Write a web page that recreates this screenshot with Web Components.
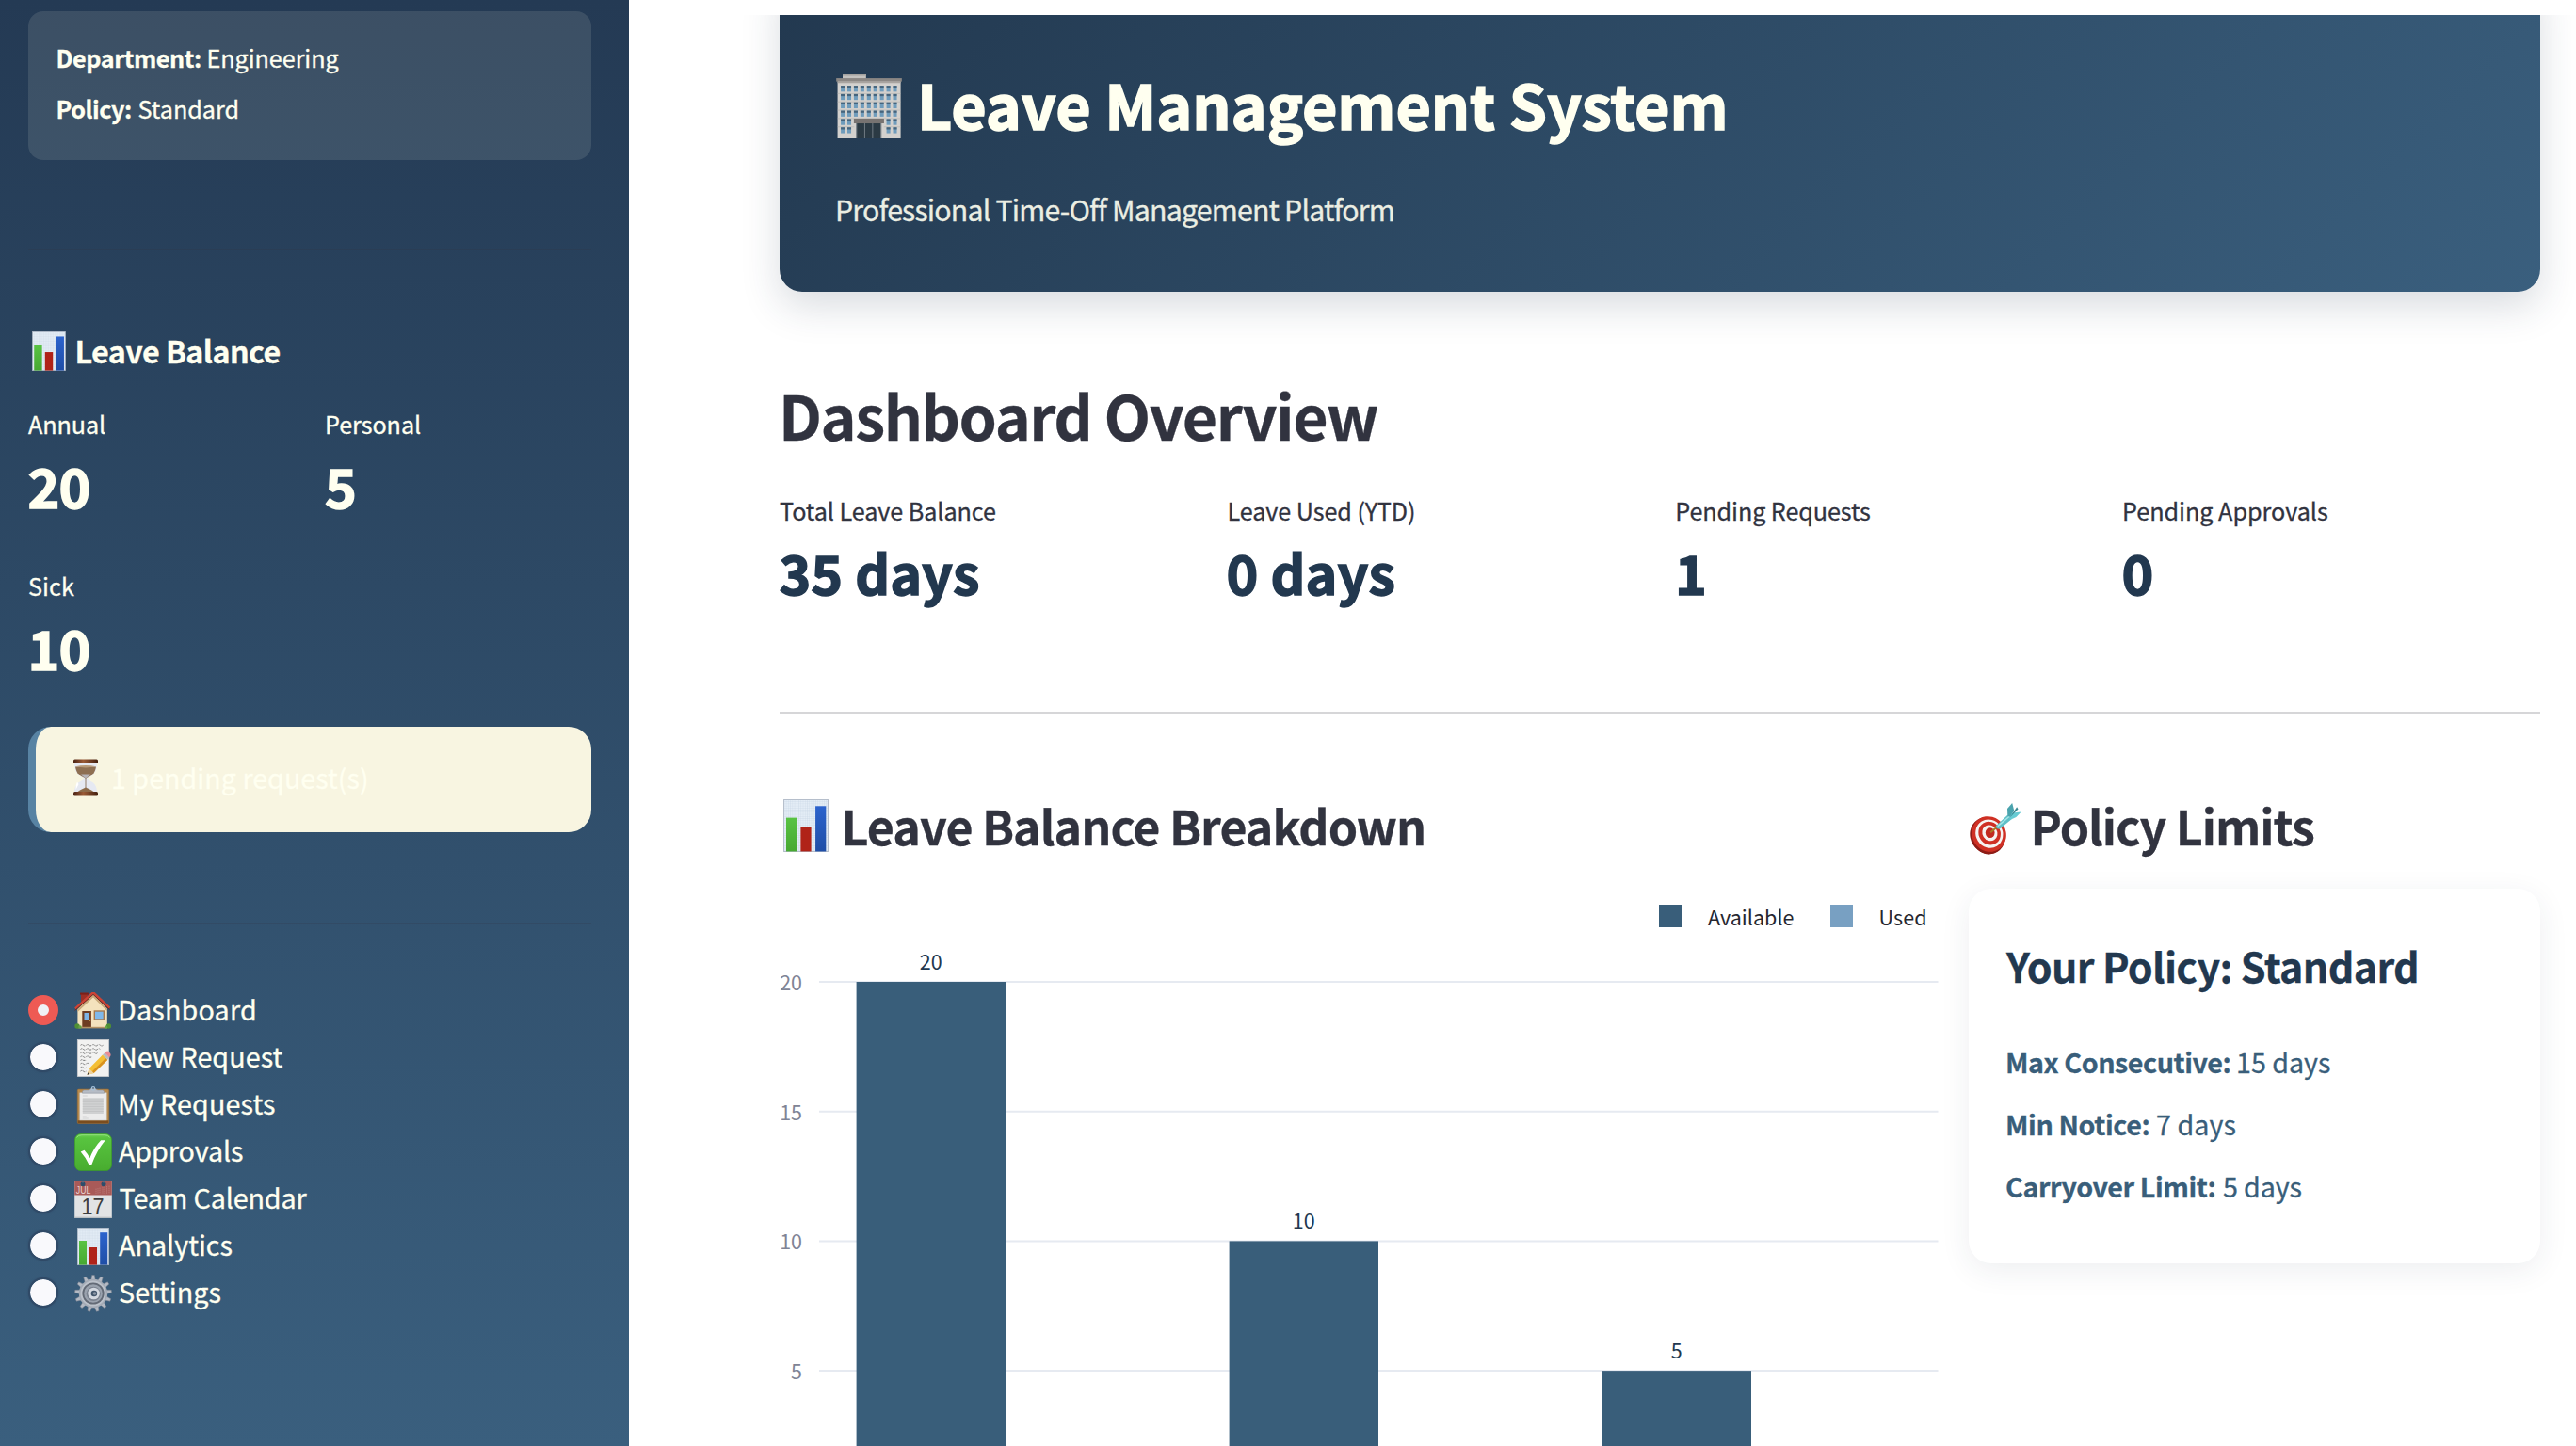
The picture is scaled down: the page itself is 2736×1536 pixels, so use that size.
<!DOCTYPE html>
<html lang="en">
<head>
<meta charset="utf-8">
<title>Leave Management System</title>
<style>
html,body{margin:0;padding:0;background:#fff}
body{width:2736px;height:1536px;overflow:hidden;font-family:"Noto Sans CJK SC","Noto Sans",sans-serif;color:#31333f;-webkit-text-stroke:.3px currentColor}
</style>
</head>
<body>
<leave-app></leave-app>
<script>
const FONT = '"Noto Sans CJK SC","Noto Sans",sans-serif';
const ctx = document.createElement('canvas').getContext('2d');
const define = (name, html, extra) => customElements.define(name, class extends HTMLElement {
  constructor(){ super(); this.attachShadow({mode:'open'}); }
  connectedCallback(){
    this.shadowRoot.innerHTML = typeof html === 'function' ? html(this) : html;
    if (extra) extra(this);
  }
});

/* One line of text whose glyphs are tracked to fill the given width. */
define('fit-text', '<style>:host{display:inline-block;white-space:nowrap;flex:none}span{display:block}</style><span><slot></slot></span>', el => {
  const s = getComputedStyle(el), t = el.textContent;
  ctx.font = `${s.fontWeight} ${s.fontSize} ${FONT}`;
  const m = ctx.measureText(t), ink = m.actualBoundingBoxRight + m.actualBoundingBoxLeft;
  const w = +el.getAttribute('w') || ink;
  el.style.width = w + 'px';
  const span = el.shadowRoot.querySelector('span');
  span.style.marginLeft = m.actualBoundingBoxLeft + 'px';
  if (t.length > 1) span.style.letterSpacing = ((w - ink) / (t.length - 1)).toFixed(3) + 'px';
});

const ICONS = {
chart:`<defs><linearGradient id="g" x2="0" y2="1"><stop offset="0" stop-color="#58c343"/><stop offset="1" stop-color="#47a832"/></linearGradient><linearGradient id="b" x2="0" y2="1"><stop offset="0" stop-color="#2c63cd"/><stop offset="1" stop-color="#1f4ea6"/></linearGradient><pattern id="p" width="1.6" height="1.6" patternUnits="userSpaceOnUse"><path d="M0 0H1.6M0 0V1.6" stroke="#c3d2e2" stroke-width=".35"/></pattern></defs>
<rect x="3.3" y=".3" width="33.4" height="39.4" fill="#e4edf6" stroke="#a9b2c0" stroke-width=".6"/><rect x="3.6" y=".6" width="32.8" height="38.8" fill="url(#p)"/>
<rect x="5" y="14" width="8" height="25.6" fill="url(#g)"/><rect x="16" y="21" width="8" height="18.6" fill="#b02318"/><rect x="27.2" y="5.2" width="8" height="34.4" fill="url(#b)"/>`,
house:`<path d="M7 .8h7v9H7z" fill="#9c2f25"/><path d="M6 .6h9v2H6z" fill="#7c2019"/><path d="M3.4 18 20 2.5 34.8 17.5V38H3.4z" fill="#f4e2bd"/><path d="M3.4 18 20 2.5 34.8 17.5V20L20 5.5 3.4 21z" fill="#c9a87a"/><path d="M1 17.5 20 .3 37.4 16.8" fill="none" stroke="#cc4335" stroke-width="2.6"/><path d="M.6 19.4 20 2.4 37.6 18.6" fill="none" stroke="#6e241c" stroke-width=".9"/>
<rect x="8.3" y="20" width="9.6" height="17.7" fill="#6e3d22"/><rect x="10.5" y="22" width="5" height="7" fill="#7db4e6"/><circle cx="16.5" cy="30" r=".8" fill="#e8c060"/><rect x="20.6" y="19.3" width="11.4" height="10.5" fill="#a7794c"/><rect x="22" y="20.7" width="8.6" height="7.6" fill="#7fb8ea"/><path d="M3.4 36.8h31.4v1.6H3.4z" fill="#b59263"/>
<circle cx="3" cy="36" r="2.7" fill="#4f8f34"/><circle cx="6" cy="37" r="1.8" fill="#66a544"/><circle cx="36.4" cy="36" r="2.7" fill="#4f8f34"/><circle cx="33.6" cy="37.2" r="1.6" fill="#66a544"/>`,
memo:`<rect x="3.3" y=".4" width="33.4" height="39.2" fill="#f2f2f1" stroke="#c9cacc" stroke-width=".7"/><g fill="none" stroke="#6b6b6b" stroke-width=".9" stroke-dasharray="1.6 .7 3 .9 .8 .6"><path d="M6.5 6.3q1.5-1.4 3 0t3 0 3 0 3 0 3 0 3 0 3 0 3 0"/><path d="M6.5 10.5q1.5-1.4 3 0t3 0 3 0 3 0 3 0 3 0 3 0"/><path d="M6.5 14.6q1.5-1.4 3 0t3 0 3 0 3 0 3 0 3 0"/><path d="M6.5 18.6q1.5-1.4 3 0t3 0 3 0 3 0"/><path d="M6.5 22.4q1.5-1.4 3 0h3"/><path d="M6.5 26q1.5-1.4 3 0t3 0 3 0"/><path d="M6.5 30q1.5-1.4 3 0t3 0"/><path d="M6.5 34q1.5-1.4 3 0t3 0"/></g>
<path d="M13.6 37.8 15.7 31 30 16.6l5.2 5.2L20.6 36z" fill="#f4bf35"/><path d="M18.8 34.2 33.3 20l1.9 1.9L20.6 36z" fill="#d9921f"/><path d="M15.7 31 20.6 36l-7 1.8z" fill="#ecd1a0"/><path d="m14.4 35.3-.8 2.5 2.5-.7z" fill="#333"/><path d="m30 16.6 2.4-2.3 5.1 5.1-2.3 2.4z" fill="#b8bcc0"/><path d="m32.2 14.4 1.4-1.3q1.8-1.3 3.8.8t.9 3.8l-1.2 1.5z" fill="#ea8c93"/>`,
clip:`<rect x="3.2" y="3" width="33.6" height="36.6" rx="1.4" fill="#b88b4e" stroke="#8e6532" stroke-width=".6"/><path d="M3.6 36.2h32.8v3H3.6z" fill="#7b4d1e"/><rect x="5.8" y="6.8" width="28.4" height="29.2" fill="#ececec" stroke="#c8c8c8" stroke-width=".5"/><rect x="8.8" y="12.2" width="22" height="16.8" fill="#d0d1d2"/><path d="M8.8 14h22M8.8 16.5h22M8.8 19h22M8.8 21.5h22M8.8 24h22M8.8 26.5h22" stroke="#bfc0c2" stroke-width=".7"/><path d="M8.8 10h5M8.8 32h4M8.8 34h6" stroke="#c9cacc" stroke-width=".7"/><path d="M8.5 7.2V5.6Q8.5 4 10.5 4H15q1.7 0 2.2-1.4h5.6Q23.3 4 25 4h4.500q2 0 2 1.600v1.600z" fill="#b6bcc5" stroke="#868d97" stroke-width=".5"/><circle cx="20" cy="2.300" r="1.700" fill="none" stroke="#a9c3da" stroke-width="1.100"/>`,
check:`<defs><linearGradient id="c" x2="0" y2="1"><stop offset="0" stop-color="#6fd158"/><stop offset=".12" stop-color="#58c43f"/><stop offset="1" stop-color="#48ac2f"/></linearGradient></defs><rect x=".4" y=".4" width="39.2" height="39.2" rx="6.500" fill="url(#c)" stroke="#3e9c2a" stroke-width=".8"/><path d="M2.500 4.500Q4 1.700 8 1.700h24q4 0 5.500 2.800" fill="none" stroke="#8fe07b" stroke-width="1"/><path d="M6.700 19.600 10.500 17.800Q14 21.500 16.300 26.300 21 14.500 28.200 7.300H32.800Q23.500 18.500 18.300 33.300H15.500Q12 25.500 6.700 19.600z" fill="#fff"/>`,
cal:`<rect x=".2" y=".2" width="39.600" height="39.600" fill="#e2e3e4"/><rect x=".2" y=".2" width="39.600" height="15.300" fill="#a95a58"/><circle cx="9" cy="3.700" r="2.500" fill="#2b4d6b"/><circle cx="31" cy="3.700" r="2.500" fill="#2b4d6b"/><path d="M9 0v2.500M31 0v2.500" stroke="#6f7f90" stroke-width="1"/><path d="M23 8.500v5.500M25 8v6M27 7.500v6.500M30 7v7M32 6.500v7.500M34.500 6v8M37 5.500v8.500" stroke="#bd7c79" stroke-width=".8" stroke-dasharray="1.500 .6"/>
<text x="1.800" y="13.900" font-size="10.500" font-family="Liberation Sans,sans-serif" fill="#e8d2d0" textLength="15.500" lengthAdjust="spacingAndGlyphs">JUL</text><text x="7.500" y="36" font-size="24.500" font-family="Liberation Sans,sans-serif" fill="#3c3c3e" textLength="24" lengthAdjust="spacingAndGlyphs">17</text><path d="M.2 39.200h39.600" stroke="#b9bbbd" stroke-width="1"/>`,
target:`<path d="M26.500 21c0 3 .8 14.500-7 17.800-7 2.500-13-1.500-16-7z" fill="#7b1813"/><ellipse cx="14.300" cy="25.500" rx="13" ry="14.300" transform="rotate(-32 14.300 25.500)" fill="#8f1c16"/><ellipse cx="15.400" cy="24.300" rx="12.800" ry="13.700" transform="rotate(-32 15.400 24.300)" fill="#cf3024"/><ellipse cx="15.600" cy="24" rx="10.200" ry="11" transform="rotate(-32 15.600 24)" fill="#f6f3f1"/><ellipse cx="15.800" cy="23.700" rx="8.200" ry="9" transform="rotate(-32 15.800 23.700)" fill="#cf3024"/><ellipse cx="16" cy="23.500" rx="5.600" ry="6.200" transform="rotate(-32 16 23.500)" fill="#f6f3f1"/><ellipse cx="16.200" cy="23.300" rx="3.500" ry="3.800" fill="#c22a20"/><path d="m16.500 23 7.500-6" stroke="#a87a24" stroke-width="1.500"/><path d="m20.500 18.200 9-8.400 3 3.200-8.700 7.200q-2.600.9-3.300-2z" fill="#5fc0c8"/><path d="m22 18.300 9.500-8" stroke="#a7e6e8" stroke-width="1"/><path d="M29.500 10.500 29.300 5 33 .7l1.400 5.600-2.700 5.200z" fill="#4aa3ad"/><path d="m31 12 2-3.800L39.800 7.500 36 11.500l-4.700 2z" fill="#67cbd3"/><path d="m31 12 5.500-8.200 1 1.500z" fill="#3a8791"/>`,
};
/* gear and building are generated: teeth and windows repeat */
ICONS.gear = (() => {
  let t = '';
  for (let i = 0; i < 13; i++) t += `<path d="M17.800 6 18.700.5h2.600l.9 5.500z" transform="rotate(${i*360/13} 20 20)"/>`;
  return `<g fill="#b4bac4" stroke="#7c828e" stroke-width=".5">${t}</g><circle cx="20" cy="20" r="15.200" fill="#a4abb6"/><circle cx="20" cy="20" r="13.500" fill="#bcc2cb"/><circle cx="20" cy="20" r="11.600" fill="#636a76"/><circle cx="20" cy="20" r="9.800" fill="#9aa2ae"/><circle cx="20.300" cy="20.300" r="7.600" fill="#7a828f"/><circle cx="20.600" cy="20" r="6.300" fill="#d3d8e0"/><circle cx="20.900" cy="20" r="3.300" fill="#42566c"/><circle cx="21.500" cy="20" r="1.800" fill="#8b96a5"/>`;
})();
ICONS.building = (() => {
  let w = '';
  for (let r = 0; r < 6; r++) for (let c = 0; c < 9; c++) {
    if (r > 3 && c > 1 && c < 7) continue;
    const x = 2.9 + c * 3.96, y = 7.1 + r * 5.2;
    w += `<rect x="${x}" y="${y}" width="2.300" height="3.700" fill="#6f9cbc"/><rect x="${x}" y="${y}" width="2.300" height="1.300" fill="#46647c"/>`;
  }
  return `<rect x="4" y="0" width="14.200" height="4" fill="#c4c2bf"/><path d="M4 0h14.200v.9H4z" fill="#a5a3a0"/><rect x=".9" y="4" width="38.300" height="36" fill="#d3d1ce"/><rect x=".1" y="2.400" width="39.800" height="2.100" fill="#8b8784"/><path d="M.9 4.500h38.300v.9H.9z" fill="#a9a5a1"/><g stroke="#bebbb7" stroke-width=".5"><path d="M1 12h38M1 17.200h38M1 22.400h38M1 27.600h38M1 32.800h10M29 32.800h10"/></g>${w}<rect x="10.800" y="27.600" width="18.300" height="3" fill="#777371"/><rect x="12.600" y="30.600" width="14.600" height="9.400" fill="#2b3a44"/><path d="M12.400 30.600V40M17.400 30.600V40M22.200 30.600V40M27.300 30.600V40" stroke="#6d7880" stroke-width=".6"/>`;
})();
ICONS.hourglass = `<defs><linearGradient id="w"><stop offset="0" stop-color="#4a2213"/><stop offset=".4" stop-color="#9a5a36"/><stop offset="1" stop-color="#44200f"/></linearGradient></defs><path d="M8 4h24q0 9-4 12.500-6 3.500-6.500 4.500.5 1 6.500 4.500 4 3.500 4 10.500H8q0-7 4-10.500 6-3.500 6.500-4.500-.5-1-6.500-4.500Q8 13 8 4z" fill="#e6e9f2"/><path d="M9 8.500h22q-1 6-3.500 7.800-3 2-7.500 4.300-4.500-2.300-7.500-4.300Q10 14.500 9 8.500z" fill="#8e6f52"/><path d="M9 8.300q11-2.500 22 0-11 2.200-22 0z" fill="#b89a78"/><path d="M15 16.500h10l-5 4z" fill="#b7b4b8"/><path d="M19.600 20h.8v12h-.8z" fill="#7d6047"/><path d="M20 30.500q7 3 9 5H11q2-2 9-5z" fill="#8c6a4a"/><path d="M11 24.500Q9 28 9.500 33l3-6z" fill="#fff"/><rect x="7" y=".4" width="26" height="4.600" rx="1.500" fill="url(#w)"/><rect x="7" y="35" width="26" height="4.600" rx="1.500" fill="url(#w)"/>`;

define('emoji-icon', el => `<style>:host{display:block;flex:none;-webkit-text-stroke:0;width:${el.getAttribute('w')}px;height:${el.getAttribute('h') || el.getAttribute('w')}px}svg{display:block;width:100%;height:100%}</style><svg viewBox="${el.getAttribute('box') || '0 0 40 40'}" preserveAspectRatio="none">${ICONS[el.getAttribute('name')]}</svg>`);

define('metric-item', el => `<style>:host{display:flex;flex-direction:column;gap:8px}
.l{font-size:25.200px;line-height:40px;height:40px;padding-left:${el.getAttribute('lx')||0}px}
.v{font-size:57.300px;line-height:76px;height:75px;font-weight:700;-webkit-text-stroke:1.500px currentColor;color:var(--value);padding-left:${el.getAttribute('vx')||0}px}</style>
<div class="l"><fit-text w="${el.getAttribute('lw')}">${el.getAttribute('label')}</fit-text></div>
<div class="v"><fit-text w="${el.getAttribute('vw')}">${el.getAttribute('value')}</fit-text></div>`);

define('rule-line', '<style>:host{display:block;height:2px;flex:none;background:var(--rule)}</style>');

define('nav-item', el => `<style>:host{display:flex;height:50px;color:#fffff0}
.r{box-sizing:border-box;width:32px;height:32px;border-radius:50%;margin-top:9px;flex:none}
.off{background:#f9f9fc;border:2px solid #304a67;box-shadow:0 0 2px #304a67;background-clip:padding-box}
.on{background:#f0f2f6;border:10px solid #ee5a54}
emoji-icon{margin:6px 0 0 17px}
.t{font-size:28.700px;line-height:48px;padding-left:${el.getAttribute('tx') || 8}px}</style>
<div class="r ${el.hasAttribute('active') ? 'on' : 'off'}"></div><emoji-icon name="${el.getAttribute('icon')}" w="40"></emoji-icon><div class="t"><fit-text w="${el.getAttribute('w')}">${el.textContent}</fit-text></div>`);

define('side-bar', `<style>:host{box-sizing:border-box;display:flex;flex-direction:column;width:668px;height:1536px;flex:none;padding:12px 40px 0 30px;background:linear-gradient(180deg,#243a54 0%,#3a5f7e 100%);color:#fffff0;--value:#fffff0;--rule:rgba(49,51,63,.2)}
.card{box-sizing:border-box;height:158px;border-radius:16px;background:rgba(255,255,240,.11);padding:22px 31.500px;font-size:25.200px;line-height:54px}
.row{display:flex;gap:8.500px}b{font-weight:700}
.m1{margin-top:94px}
.h{display:flex;margin-top:82px;height:48px;line-height:48px;font-size:32.300px;font-weight:700}
.h emoji-icon{margin:4px 8.500px 0 1px}
.grid{display:grid;grid-template-columns:283px 283px;column-gap:32px;row-gap:49px;margin-top:34px}
.alert{box-sizing:border-box;display:flex;height:112px;margin-top:47px;border-radius:24px;border-left:8px solid #5883a3;background:#f8f5e1;padding-left:38px;line-height:107px;font-size:28.700px}
.alert emoji-icon{margin:34px 14px 0 0}
.m2{margin-top:96px}nav{margin-top:66px;display:flex;flex-direction:column}</style>
<div class="card"><div class="row"><b><fit-text w="151.500">Department:</fit-text></b><fit-text w="138">Engineering</fit-text></div>
<div class="row"><b><fit-text w="77.500">Policy:</fit-text></b><fit-text w="105">Standard</fit-text></div></div>
<rule-line class="m1"></rule-line>
<div class="h"><emoji-icon name="chart" w="42"></emoji-icon><fit-text w="216">Leave Balance</fit-text></div>
<div class="grid"><metric-item label="Annual" lw="82" value="20" vx="1.500" vw="63"></metric-item><metric-item label="Personal" lx="2" lw="100" value="5" vx="1"></metric-item><metric-item label="Sick" lx="1" lw="48" value="10" vx="3.500" vw="61"></metric-item></div>
<div class="alert"><emoji-icon name="hourglass" w="30" h="40" box="5 0 30 40"></emoji-icon><fit-text w="270">1 pending request(s)</fit-text></div>
<rule-line class="m2"></rule-line>
<nav><nav-item active icon="house" w="144">Dashboard</nav-item><nav-item icon="memo" w="173.500">New Request</nav-item><nav-item icon="clip" w="165">My Requests</nav-item><nav-item icon="check" tx="7" w="132">Approvals</nav-item><nav-item icon="cal" tx="7.500" w="200">Team Calendar</nav-item><nav-item icon="chart" tx="7" w="120.500">Analytics</nav-item><nav-item icon="gear" w="107.500">Settings</nav-item></nav>`);

define('page-banner', `<style>:host{box-sizing:border-box;display:flex;flex-direction:column;height:342px;margin-top:-48px;flex:none;border-radius:24px;padding:99px 60px 0;background:linear-gradient(135deg,#22384f 0%,#3a5f7e 100%);box-shadow:0 16px 40px rgba(34,56,79,.17);color:#fffff0}
.t{display:flex;height:86px;line-height:86px;font-size:64.500px;font-weight:700;-webkit-text-stroke:1.500px currentColor}
.t emoji-icon{margin:12px 21px 0 0}
.s{margin-top:45px;padding-left:2px;line-height:48px;font-size:30.300px;color:#ebeee3}</style>
<div class="t"><emoji-icon name="building" w="70" h="68"></emoji-icon><fit-text w="852.500">Leave Management System</fit-text></div>
<div class="s"><fit-text w="589.500">Professional Time-Off Management Platform</fit-text></div>`);

define('section-title', el => `<style>:host{display:flex;height:68px;line-height:68px;font-size:50.200px;font-weight:700;color:#31333f}emoji-icon{margin:${el.getAttribute('top')}px ${el.getAttribute('gap')}px 0 0}</style>
<emoji-icon name="${el.getAttribute('icon')}" w="56"></emoji-icon><fit-text w="${el.getAttribute('w')}">${el.textContent}</fit-text>`);

/* Grouped bar chart; the drawing area starts at 42,133 with 27.54px per day. */
define('bar-chart', () => {
  const unit = 27.54, top = 133, left = 42, right = 1230.500;
  let g = '', b = '';
  for (const v of [20, 15, 10, 5]) {
    const y = top + (20 - v) * unit;
    g += `<path d="M${left} ${y}H${right}" stroke="#e6eaf1" stroke-width="2"/><text x="24" y="${y + 9}" text-anchor="end" fill="#808495">${v}</text>`;
  }
  [20, 10, 5].forEach((v, i) => {
    const y = top + (20 - v) * unit, x = 81.600 + i * 396;
    b += `<rect x="${x}" y="${y}" width="158.400" height="${v * unit}" fill="#395e7a"/><text x="${x + 79.200}" y="${y - 13.500}" text-anchor="middle" fill="#22384f">${v}</text>`;
  });
  return `<style>:host{display:block;width:1231px;height:626px}svg{display:block;overflow:hidden}text{font-size:21.500px;font-family:${FONT.replace(/"/g, "'")}}</style>
<svg width="1231" height="626" viewBox="0 0 1231 626">${g}${b}
<rect x="934" y="51" width="24" height="24" fill="#395e7a"/><text x="986" y="73" textLength="91.500" fill="#262730">Available</text>
<rect x="1116" y="51" width="24" height="24" fill="#78a0c2"/><text x="1167.500" y="73" textLength="51" fill="#262730">Used</text></svg>`;
});

define('policy-card', `<style>:host{box-sizing:border-box;display:block;width:607px;height:398.500px;margin-top:33.500px;border-radius:24px;background:#fff;box-shadow:0 8px 32px rgba(34,56,79,.08);padding:52px 0 0 39px;color:#395e7a;font-size:28.700px;line-height:66px}
h3{margin:0 0 41px;font-size:43px;line-height:58px;height:58px;font-weight:700;color:#22384f}
.row{display:flex;gap:8.500px;padding-left:2px;height:66px}b{font-weight:700}.c{padding-left:1px}</style>
<h3><fit-text w="437">Your Policy: Standard</fit-text></h3>
<div class="row"><b><fit-text w="236.500">Max Consecutive:</fit-text></b><fit-text w="98">15 days</fit-text></div>
<div class="row"><b><fit-text w="150.500">Min Notice:</fit-text></b><fit-text w="83.500">7 days</fit-text></div>
<div class="row c"><b><fit-text w="221.500">Carryover Limit:</fit-text></b><fit-text w="83.500">5 days</fit-text></div>`);

define('main-view', `<style>:host{box-sizing:border-box;display:flex;flex-direction:column;flex:1;height:1520px;margin-top:16px;padding:0 38px 0 160px;overflow:hidden;--value:#22384f;--rule:#d6d6d8}
h1{margin:87px 0 0;padding-left:4px;height:86px;line-height:86px;font-size:64.500px;font-weight:700;color:#31333f}
.m{display:grid;grid-template-columns:repeat(4,443.500px);column-gap:32px;margin-top:39px}
rule-line{margin-top:111px}
.c{display:flex;gap:32px;margin-top:84px}.l{width:1231px}</style>
<page-banner></page-banner>
<h1><fit-text w="631">Dashboard Overview</fit-text></h1>
<div class="m"><metric-item label="Total Leave Balance" lx="0" lw="229" value="35 days" vx=".5" vw="210.500"></metric-item><metric-item label="Leave Used (YTD)" lx="2" lw="196.500" value="0 days" vx="1" vw="176"></metric-item><metric-item label="Pending Requests" lx="2.300" lw="204.700" value="1" vx="4"></metric-item><metric-item label="Pending Approvals" lx="1.500" lw="216" value="0" vx="1"></metric-item></div>
<rule-line></rule-line>
<div class="c"><div class="l"><section-title icon="chart" top="7" gap="13.500" w="614.500">Leave Balance Breakdown</section-title><bar-chart></bar-chart></div>
<div><section-title icon="target" top="10" gap="13.500" w="297.500">Policy Limits</section-title><policy-card></policy-card></div></div>`);

define('leave-app', '<style>:host{display:flex;width:2736px;height:1536px;overflow:hidden;background:#fff}</style><side-bar></side-bar><main-view></main-view>');
</script>
</body>
</html>
